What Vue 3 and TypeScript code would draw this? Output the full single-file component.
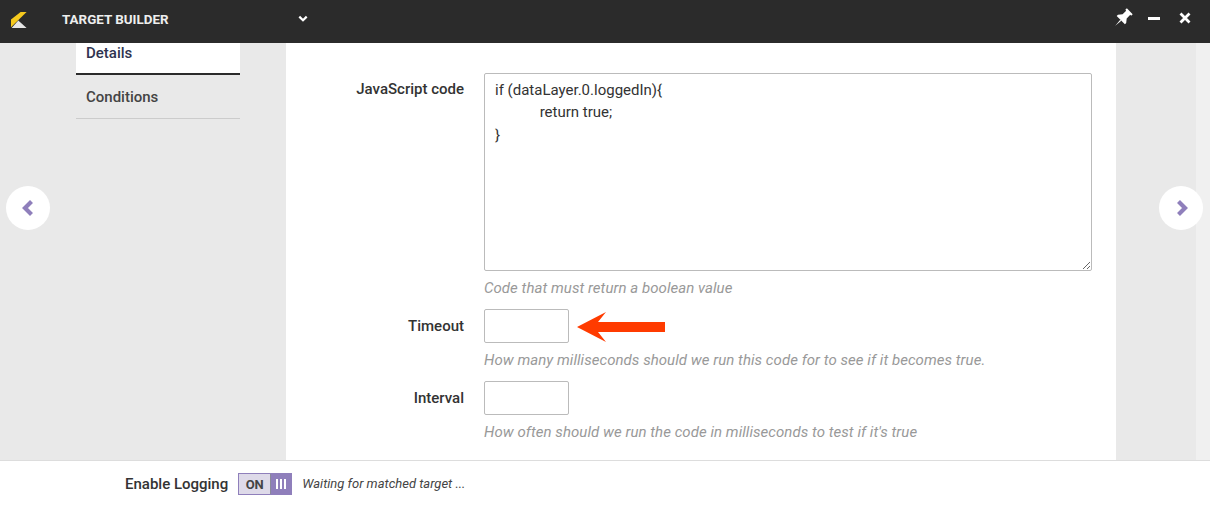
<script setup lang="ts">
const code = 'if (dataLayer.0.loggedIn){\n\treturn true;\n}'
</script>

<template>
  <div class="app">
    <header class="topbar">
      <svg class="logo" width="17" height="17" viewBox="0 0 17 17">
        <path d="M0 7.6 L9.6 0 L15.6 0 L0 15.3Z" fill="#f5c91e" />
        <path d="M0.6 16 L7.3 8.6 L15.6 16Z" fill="#e6e6e6" />
      </svg>
      <span class="title">TARGET BUILDER</span>
      <svg class="chevron" width="10" height="8" viewBox="0 0 10 8">
        <path d="M1.3 1.6 L5 5.2 L8.7 1.6" fill="none" stroke="#fff" stroke-width="2.2" />
      </svg>
      <div class="actions">
        <svg class="pin" width="23" height="23" viewBox="-1.5 -1 19 19">
          <g transform="rotate(45 8 8.5)">
            <path d="M4.6 0 H11.4 V1.8 H10.4 V6 L12.8 9 V10.5 H3.2 V9 L5.6 6 V1.8 H4.6Z" fill="#fff" />
            <path d="M7.4 10.5 H8.6 L8 17Z" fill="#fff" />
          </g>
        </svg>
        <span class="minus"></span>
        <svg width="12" height="12" viewBox="0 0 12 12">
          <path d="M1.5 1.5 L10.5 10.5 M10.5 1.5 L1.5 10.5" stroke="#fff" stroke-width="2.8" />
        </svg>
      </div>
    </header>

    <main class="body">
      <div class="stage">
        <nav class="side">
          <div class="tab active">Details</div>
          <div class="tab">Conditions</div>
        </nav>
        <section class="panel">
          <div class="row">
            <label class="label label-code">JavaScript code</label>
            <div class="field">
              <textarea class="code" readonly :value="code"></textarea>
              <p class="hint">Code that must return a boolean value</p>
            </div>
          </div>
          <div class="row">
            <label class="label">Timeout</label>
            <div class="field">
              <div class="input-wrap">
                <input class="small" type="text" />
                <svg class="arrow" width="90" height="34" viewBox="0 0 90 34">
                  <path d="M0 17 L29 2 L21 12 L88 12 L88 22 L21 22 L29 32Z" fill="#ff3b00" />
                </svg>
              </div>
              <p class="hint">How many milliseconds should we run this code for to see if it becomes true.</p>
            </div>
          </div>
          <div class="row">
            <label class="label">Interval</label>
            <div class="field">
              <input class="small" type="text" />
              <p class="hint">How often should we run the code in milliseconds to test if it's true</p>
            </div>
          </div>
        </section>
        <button class="nav prev" aria-label="Previous">
          <svg width="14" height="18" viewBox="0 0 14 18">
            <path d="M10.5 2.5 L4 9 L10.5 15.5" fill="none" stroke="#8f7fbb" stroke-width="4.2" />
          </svg>
        </button>
        <button class="nav next" aria-label="Next">
          <svg class="next-icon" width="14" height="18" viewBox="0 0 14 18">
            <path d="M3.5 2.5 L10 9 L3.5 15.5" fill="none" stroke="#8f7fbb" stroke-width="4.2" />
          </svg>
        </button>
      </div>
      <div class="scrolltrack"></div>
    </main>

    <footer class="footer">
      <span class="log-label">Enable Logging</span>
      <div class="toggle">
        <span class="on">ON</span>
        <span class="grip"><i></i><i></i><i></i></span>
      </div>
      <span class="status">Waiting for matched target ...</span>
    </footer>
  </div>
</template>

<style scoped>
.app {
  width: 1210px;
  height: 505px;
  display: flex;
  flex-direction: column;
  overflow: hidden;
  font-family: Roboto, "Liberation Sans", sans-serif;
  font-size: 15px;
  color: #333;
}
.topbar {
  height: 43px;
  flex: none;
  background: #2b2b2b;
  display: flex;
  align-items: center;
  color: #fff;
}
.logo {
  margin: -3px 0 0 11px;
}
.title {
  margin: -4px 0 0 34px;
  width: 236px;
  font-size: 13.4px;
  font-weight: 700;
  color: #eee;
}
.chevron {
  margin-top: -6px;
}
.actions {
  margin-left: auto;
  margin-top: -7px;
  padding-right: 19px;
  display: flex;
  align-items: center;
  gap: 13px;
}
.pin {
  margin-right: -2px;
}
.minus {
  width: 12px;
  height: 3px;
  background: #fff;
  margin: 0 6px 0 3px;
}
.body {
  flex: 1;
  min-height: 0;
  display: flex;
}
.stage {
  flex: 1;
  position: relative;
  display: flex;
  background: #e9e9e9;
  padding-right: 80px;
}
.scrolltrack {
  width: 14px;
  background: #f0f0f0;
}
.side {
  width: 164px;
  margin: 0 46px 0 76px;
  flex: none;
}
.tab {
  height: 44px;
  padding: 13px 0 0 10px;
  box-sizing: border-box;
  font-weight: 500;
  font-size: 15px;
  color: #444;
  border-bottom: 1px solid #ccc;
}
.tab.active {
  height: 32px;
  padding-top: 1px;
  background: #fff;
  color: #2e3350;
  border-bottom: 2px solid #2b2b2b;
}
.panel {
  flex: 1;
  background: #fff;
  padding: 30px 24px 0 0;
  box-sizing: border-box;
}
.row {
  display: grid;
  grid-template-columns: 178px 1fr;
  column-gap: 20px;
  margin-bottom: 12px;
}
.label {
  text-align: right;
  font-weight: 500;
  color: #333;
  font-size: 15px;
  line-height: 18px;
  padding-top: 8px;
}
.label-code {
  padding-top: 7px;
}
.field {
  min-width: 0;
}
.code {
  display: block;
  width: 100%;
  height: 198px;
  box-sizing: border-box;
  border: 1px solid #bbb;
  border-radius: 2px;
  padding: 4.6px 10px;
  font: 15px/22.5px Roboto, "Liberation Sans", sans-serif;
  color: #333;
  tab-size: 12;
  resize: vertical;
  outline: none;
  margin: 0;
}
.input-wrap {
  position: relative;
}
.small {
  display: block;
  width: 85px;
  height: 34px;
  box-sizing: border-box;
  border: 1px solid #bbb;
  border-radius: 2px;
  padding: 0 8px;
  margin: 0;
  outline: none;
}
.arrow {
  position: absolute;
  left: 93px;
  top: 1px;
}
.hint {
  margin: 8px 0 0;
  font-style: italic;
  color: #999;
  font-size: 15px;
  line-height: 18px;
  letter-spacing: 0.05px;
}
.nav {
  position: absolute;
  top: 143px;
  width: 44px;
  height: 44px;
  border-radius: 50%;
  background: #fff;
  border: 0;
  padding: 0;
  display: flex;
  align-items: center;
  justify-content: center;
}
.prev {
  left: 6px;
}
.next {
  right: -7px;
}
.next-icon {
  margin-left: 2px;
}
.footer {
  height: 45px;
  flex: none;
  box-sizing: border-box;
  background: #fff;
  border-top: 1px solid #ddd;
  display: flex;
  align-items: center;
  padding: 2px 0 0 125px;
}
.log-label {
  font-weight: 500;
  font-size: 15px;
  color: #333;
  margin-right: 10px;
}
.toggle {
  width: 54px;
  height: 22px;
  box-sizing: border-box;
  border: 1px solid #8f7fbb;
  display: flex;
  background: #dedae9;
  margin-right: 10px;
}
.on {
  width: 31px;
  text-align: center;
  font-size: 13px;
  font-weight: 700;
  line-height: 22px;
  color: #444;
  border-right: 1px solid #8a8a9a;
}
.grip {
  flex: 1;
  background: #8f7fbb;
  display: flex;
  align-items: center;
  justify-content: center;
  gap: 2px;
}
.grip i {
  width: 2px;
  height: 10px;
  background: #fff;
}
.status {
  font-style: italic;
  font-size: 13px;
  color: #444;
  margin-top: -2px;
}
</style>
